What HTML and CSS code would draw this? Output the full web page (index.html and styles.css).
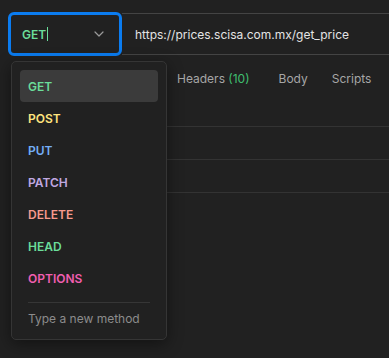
FILE: index.html
```html
<!DOCTYPE html>
<html lang="en">
<head>
<meta charset="utf-8">
<title>Request</title>
<link rel="stylesheet" href="styles.css">
</head>
<body>
<div class="page">
  <div class="request-bar">
    <div class="method-select">
      <div class="method-box">
        <span class="method-value get">GET</span><span class="caret"></span>
        <svg class="chevron" width="10" height="6" viewBox="0 0 10 6"><path d="M1 1 L5 5 L9 1" fill="none" stroke="#9a9a9a" stroke-width="1.2" stroke-linecap="round" stroke-linejoin="round"/></svg>
      </div>
      <div class="menu">
        <div class="menu-item active get">GET</div>
        <div class="menu-item post">POST</div>
        <div class="menu-item put">PUT</div>
        <div class="menu-item patch">PATCH</div>
        <div class="menu-item delete">DELETE</div>
        <div class="menu-item head">HEAD</div>
        <div class="menu-item options">OPTIONS</div>
        <div class="menu-sep"></div>
        <div class="menu-hint">Type a new method</div>
      </div>
    </div>
    <div class="url">https://prices.scisa.com.mx/get_price</div>
  </div>
  <div class="tabs">
    <span class="tab tab-headers">Headers <span class="count">(10)</span></span>
    <span class="tab">Body</span>
    <span class="tab">Scripts</span>
  </div>
  <div class="table">
    <div class="row"></div>
    <div class="row"></div>
  </div>
</div>
</body>
</html>
```

FILE: styles.css
```css
* { box-sizing: border-box; }
html, body {
  margin: 0;
  padding: 0;
  background: #212121;
}
body {
  font-family: Inter, "Noto Sans", sans-serif;
  font-size: 12px;
  color: #d6d6d6;
  width: 389px;
  height: 358px;
  overflow: hidden;
}
.page {
  padding-top: 12px;
}
.request-bar {
  display: flex;
  align-items: center;
  padding-left: 8px;
  height: 44px;
}
.method-select {
  position: relative;
  flex: 0 0 114px;
  height: 44px;
}
.method-box {
  display: flex;
  align-items: center;
  height: 44px;
  border: 3px solid #0b7cf0;
  border-radius: 6px;
  padding: 0 15px 0 11px;
  font-weight: 600;
  font-size: 12px;
}
.caret {
  display: inline-block;
  width: 1px;
  height: 14px;
  background: #6bdd9a;
  margin-left: 1px;
}
.chevron {
  margin-left: auto;
}
.url {
  flex: 1;
  height: 42px;
  border-top: 1px solid #444;
  border-bottom: 1px solid #444;
  display: flex;
  align-items: center;
  padding-left: 13px;
  color: #e4e4e4;
  font-size: 12px;
  white-space: nowrap;
}
.get { color: #6bdd9a; }
.post { color: #ffe47e; }
.put { color: #74aef6; }
.patch { color: #c0a8e1; }
.delete { color: #f79a8e; }
.head { color: #6bdd9a; }
.options { color: #f15eb0; }

.menu {
  position: absolute;
  left: 3px;
  top: 49px;
  width: 156px;
  background: #212121;
  border: 1px solid #353535;
  border-radius: 5px;
  padding: 8px 8px 6px;
  box-shadow: 0 4px 16px rgba(0, 0, 0, 0.45);
  z-index: 10;
}
.menu-item {
  height: 32px;
  display: flex;
  align-items: center;
  padding-left: 8px;
  font-weight: 600;
  font-size: 12px;
  border-radius: 4px;
}
.menu-item.active {
  background: #3b3b3b;
}
.menu-sep {
  height: 1px;
  background: #363636;
  margin: 8px 8px 0;
}
.menu-hint {
  height: 30px;
  display: flex;
  align-items: center;
  padding-left: 8px;
  color: #8c8c8c;
  font-size: 12px;
}

.tabs {
  display: flex;
  align-items: center;
  height: 32px;
  margin-top: 6px;
  padding-left: 177px;
  gap: 24px;
  color: #a6a6a6;
  font-size: 12px;
}
.tab-headers { margin-right: 5px; }
.tab .count { color: #3fbf6f; }
.table {
  margin: 32px 0 0 16px;
  border-bottom: 1px solid #333;
}
.row {
  height: 33px;
  border-top: 1px solid #333;
}
```
